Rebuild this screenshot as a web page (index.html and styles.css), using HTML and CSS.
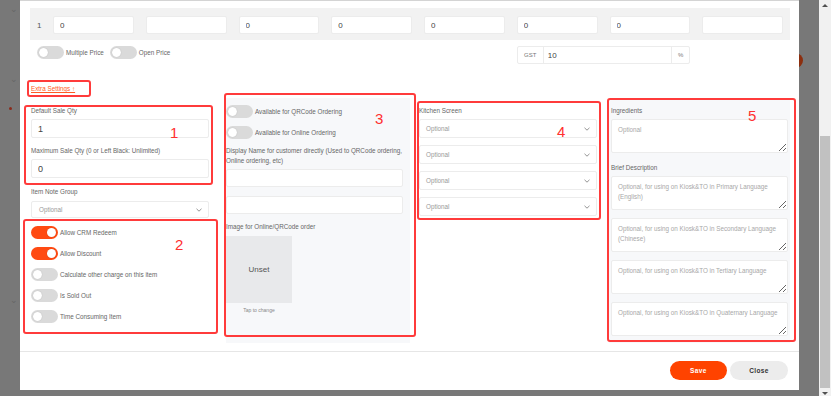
FILE: index.html
```html
<!DOCTYPE html>
<html lang="en">
<head>
    <meta charset="UTF-8">
    <meta name="viewport" content="width=device-width, initial-scale=1.0">
    <title>Edit Item</title>
    <link rel="stylesheet" href="styles.css">
</head>
<body>
<div class="screen">
    <div class="backdrop">
        <span class="under-chev chev-a">&#8964;</span>
        <span class="under-chev chev-b">&#8964;</span>
        <span class="under-chev chev-c">&#8964;</span>
        <span class="under-dot"></span>
        <span class="under-btn"></span>

        <div class="modal">
            <div class="modal-body">
                <div class="price-row">
                    <span class="row-no">1</span>
                    <input class="cell" value="0">
                    <input class="cell" value="">
                    <input class="cell" value="0">
                    <input class="cell" value="0">
                    <input class="cell" value="0">
                    <input class="cell" value="0">
                    <input class="cell" value="0">
                    <input class="cell" value="">
                </div>
                <div class="price-opts">
                    <div class="switches">
                        <label class="switch-line"><span class="switch"></span>Multiple Price</label>
                        <label class="switch-line"><span class="switch"></span>Open Price</label>
                    </div>
                    <div class="gst">
                        <span class="addon addon-gst">GST</span>
                        <input class="gst-input" value="10">
                        <span class="addon addon-pct">%</span>
                    </div>
                </div>

                <div class="extra-head"><a class="extra-link" href="#">Extra Settings ↑</a></div>

                <div class="extra">
                    <div class="col col-qty">
                        <div class="label">Default Sale Qty</div>
                        <input class="field" value="1">
                        <div class="label gap-label">Maximum Sale Qty (0 or Left Black: Unlimited)</div>
                        <input class="field" value="0">
                        <div class="label note-label">Item Note Group</div>
                        <div class="select select-note"><span>Optional</span>
                            <svg width="6" height="4" viewBox="0 0 6 4"><path d="M0.5 0.8 L3 3.2 L5.5 0.8" fill="none" stroke="#888" stroke-width="0.9"/></svg>
                        </div>
                        <div class="toggles">
                            <label class="switch-line"><span class="switch on"></span>Allow CRM Redeem</label>
                            <label class="switch-line"><span class="switch on"></span>Allow Discount</label>
                            <label class="switch-line"><span class="switch"></span>Calculate other charge on this item</label>
                            <label class="switch-line"><span class="switch"></span>Is Sold Out</label>
                            <label class="switch-line"><span class="switch"></span>Time Consuming Item</label>
                        </div>
                    </div>

                    <div class="col col-online panel">
                        <label class="switch-line"><span class="switch"></span>Available for QRCode Ordering</label>
                        <label class="switch-line"><span class="switch"></span>Available for Online Ordering</label>
                        <div class="label display-label">Display Name for customer directly (Used to QRCode ordering, Online ordering, etc)</div>
                        <input class="field field-name" value="">
                        <input class="field field-name second" value="">
                        <div class="label image-label">Image for Online/QRCode order</div>
                        <div class="image-box">Unset</div>
                        <div class="image-hint">Tap to change</div>
                    </div>

                    <div class="col col-kitchen">
                        <div class="label">Kitchen Screen</div>
                        <div class="select"><span>Optional</span>
                            <svg width="6" height="4" viewBox="0 0 6 4"><path d="M0.5 0.8 L3 3.2 L5.5 0.8" fill="none" stroke="#888" stroke-width="0.9"/></svg>
                        </div>
                        <div class="select"><span>Optional</span>
                            <svg width="6" height="4" viewBox="0 0 6 4"><path d="M0.5 0.8 L3 3.2 L5.5 0.8" fill="none" stroke="#888" stroke-width="0.9"/></svg>
                        </div>
                        <div class="select"><span>Optional</span>
                            <svg width="6" height="4" viewBox="0 0 6 4"><path d="M0.5 0.8 L3 3.2 L5.5 0.8" fill="none" stroke="#888" stroke-width="0.9"/></svg>
                        </div>
                        <div class="select"><span>Optional</span>
                            <svg width="6" height="4" viewBox="0 0 6 4"><path d="M0.5 0.8 L3 3.2 L5.5 0.8" fill="none" stroke="#888" stroke-width="0.9"/></svg>
                        </div>
                    </div>

                    <div class="col col-desc panel">
                        <div class="label">Ingredients</div>
                        <textarea class="area" placeholder="Optional"></textarea>
                        <div class="label brief-label">Brief Description</div>
                        <textarea class="area" placeholder="Optional, for using on Kiosk&amp;TO in Primary Language (English)"></textarea>
                        <textarea class="area next" placeholder="Optional, for using on Kiosk&amp;TO in Secondary Language (Chinese)"></textarea>
                        <textarea class="area next" placeholder="Optional, for using on Kiosk&amp;TO in Tertiary Language"></textarea>
                        <textarea class="area next" placeholder="Optional, for using on Kiosk&amp;TO in Quaternary Language"></textarea>
                    </div>
                </div>
            </div>

            <div class="modal-footer">
                <button class="btn btn-save">Save</button>
                <button class="btn btn-close">Close</button>
            </div>

            <!-- review markers drawn over the dialog -->
            <div class="mark mark-extra"></div>
            <div class="mark mark-1"></div>
            <div class="mark mark-2"></div>
            <div class="mark mark-3"></div>
            <div class="mark mark-4"></div>
            <div class="mark mark-5"></div>
            <span class="mark-no no-1">1</span>
            <span class="mark-no no-2">2</span>
            <span class="mark-no no-3">3</span>
            <span class="mark-no no-4">4</span>
            <span class="mark-no no-5">5</span>
        </div>
    </div>

    <div class="scrollbar">
        <span class="arrow arrow-up"></span>
        <div class="track"><div class="thumb"></div></div>
        <span class="arrow arrow-down"></span>
    </div>
</div>
</body>
</html>
```

FILE: styles.css
```css
* {
    box-sizing: border-box;
}
body {
    margin: 0;
    font-family: "Liberation Sans", Arial, sans-serif;
    background-color: #787878;
    color: #333;
}
.screen {
    display: flex;
    height: 396px;
    overflow: hidden;
}
.backdrop {
    position: relative;
    flex: 1;
}

/* page under the overlay */
.under-chev {
    position: absolute;
    left: 10px;
    font-size: 9px;
    color: #666;
}
.chev-a { top: 4px; }
.chev-b { top: 74px; }
.chev-c { top: 295px; }
.under-dot {
    position: absolute;
    left: 9px;
    top: 107px;
    width: 3px;
    height: 3px;
    border-radius: 50%;
    background-color: #8a2a1a;
}
.under-btn {
    position: absolute;
    left: 786px;
    top: 53px;
    width: 17px;
    height: 15px;
    border-radius: 8px;
    background-color: #8c2e0e;
}

/* dialog */
.modal {
    position: relative;
    z-index: 1;
    width: 779px;
    height: 390px;
    margin: 0 auto;
    background-color: #fff;
    border-top: 1px solid #d4d4d4;
}
.modal-body {
    padding: 7px 9px 8px 10px;
}
.price-row, .price-opts {
    display: grid;
    grid-template-columns: 4px repeat(8, 1fr);
    column-gap: 12px;
    padding: 0 7px;
}
.price-row {
    align-items: center;
    background-color: #f2f2f2;
    padding-top: 8px;
    padding-bottom: 6px;
}
.row-no {
    font-size: 8px;
    color: #555;
}
input {
    font-family: inherit;
    outline: none;
}
.cell {
    width: 100%;
    height: 18px;
    border: 1px solid #ececec;
    border-radius: 2px;
    padding: 0 6px;
    font-size: 8px;
    color: #444;
}
.price-opts {
    margin-top: 6px;
    align-items: start;
}
.switches {
    grid-column: 1 / 7;
    display: flex;
    gap: 6px;
}
.gst {
    grid-column: 7 / 9;
    display: flex;
    height: 18px;
    border: 1px solid #ececec;
    border-radius: 2px;
}
.addon {
    display: flex;
    align-items: center;
    justify-content: center;
    font-size: 6px;
    color: #777;
}
.addon-gst {
    width: 26px;
    border-right: 1px solid #ececec;
}
.addon-pct {
    width: 18px;
    border-left: 1px solid #ececec;
}
.gst-input {
    flex: 1;
    min-width: 0;
    border: none;
    padding: 0 4px;
    font-size: 8px;
    color: #444;
}

/* switches */
.switch-line {
    display: flex;
    align-items: center;
    gap: 2px;
    font-size: 6.3px;
    color: #666;
    height: 13px;
}
.switch {
    position: relative;
    width: 27px;
    height: 13px;
    border-radius: 7px;
    background-color: #dadada;
    flex-shrink: 0;
}
.switch::after {
    content: "";
    position: absolute;
    top: 2px;
    left: 2px;
    width: 9px;
    height: 9px;
    border-radius: 50%;
    background-color: #fff;
    box-shadow: 0 0 1px rgba(0, 0, 0, 0.25);
}
.switch.on {
    background-color: #ff4a12;
}
.switch.on::after {
    left: 16px;
}

.extra-head {
    height: 8px;
    margin: 18px 0 0 1px;
    line-height: 8px;
}
.extra-link {
    font-size: 6.3px;
    color: #ff5a24;
}

/* extra settings columns */
.extra {
    display: flex;
    align-items: stretch;
    margin: 8px 0 0 1px;
}
.col {
    display: flex;
    flex-direction: column;
    padding-top: 9px;
}
.col-qty {
    width: 178px;
    margin-right: 17px;
}
.col-online {
    width: 184px;
    margin-right: 9px;
    padding: 7px 7px 0 0;
}
.col-kitchen {
    width: 178px;
    margin-right: 12px;
}
.col-desc {
    width: 181px;
    padding: 9px 2px 7px 2px;
}
.panel {
    background-color: #f7f8fa;
}
.label {
    font-size: 6.3px;
    line-height: 8px;
    color: #666;
}
.field {
    width: 100%;
    height: 19px;
    margin-top: 4px;
    border: 1px solid #ececec;
    border-radius: 2px;
    padding: 0 6px;
    font-size: 9px;
    color: #444;
}
.gap-label {
    margin-top: 9px;
}
.note-label {
    margin-top: 10px;
}
.select {
    display: flex;
    align-items: center;
    justify-content: space-between;
    height: 19px;
    margin-top: 7px;
    padding: 0 6px;
    border: 1px solid #ececec;
    border-radius: 2px;
    background-color: #fff;
    font-size: 6.3px;
    color: #999;
}
.col-kitchen .label + .select {
    margin-top: 4px;
}
.select-note {
    height: 17px;
    margin-top: 5px;
    padding-left: 7px;
}
.toggles {
    display: flex;
    flex-direction: column;
    gap: 8px;
    margin-top: 8px;
}
.col-online .switch-line + .switch-line {
    margin-top: 8px;
}
.display-label {
    margin-top: 7px;
    line-height: 10px;
}
.field-name {
    height: 18px;
    margin-top: 3px;
}
.field-name.second {
    margin-top: 9px;
}
.image-label {
    margin-top: 9px;
}
.image-box {
    display: flex;
    align-items: center;
    justify-content: center;
    width: 66px;
    height: 67px;
    margin-top: 5px;
    background-color: #e8e9eb;
    font-size: 8px;
    color: #555;
}
.image-hint {
    width: 66px;
    margin-top: 3px;
    text-align: center;
    font-size: 5px;
    line-height: 8px;
    color: #888;
}
.area {
    width: 100%;
    height: 34px;
    margin-top: 4px;
    padding: 5px 6px;
    border: 1px solid #ececec;
    border-radius: 2px;
    font-family: inherit;
    font-size: 6.3px;
    line-height: 9.5px;
    color: #444;
    outline: none;
}
.area::placeholder {
    color: #a8a8a8;
}
.area.next {
    margin-top: 8px;
}
.brief-label {
    margin-top: 11px;
}

/* footer */
.modal-footer {
    display: flex;
    justify-content: flex-end;
    gap: 3px;
    padding: 9px 11px;
    border-top: 1px solid #e6e6e6;
}
.btn {
    height: 19px;
    border: none;
    border-radius: 10px;
    font-family: inherit;
    font-size: 6.5px;
    font-weight: bold;
    letter-spacing: 0.4px;
}
.btn-save {
    width: 57px;
    background-color: #ff4300;
    color: #fff;
}
.btn-close {
    width: 58px;
    background-color: #ececec;
    color: #333;
}

/* red review markers */
.mark {
    position: absolute;
    border: 2px solid #ff3b3b;
    border-radius: 3px;
    pointer-events: none;
}
.mark-extra { left: 7px; top: 79px; width: 64px; height: 17px; }
.mark-1 { left: 4px; top: 104px; width: 189px; height: 80px; }
.mark-2 { left: 3px; top: 218px; width: 195px; height: 115px; }
.mark-3 { left: 204px; top: 92px; width: 192px; height: 244px; }
.mark-4 { left: 397px; top: 100px; width: 184px; height: 119px; }
.mark-5 { left: 587px; top: 97px; width: 189px; height: 244px; }
.mark-no {
    position: absolute;
    font-size: 15px;
    line-height: 15px;
    color: #ff3030;
}
.no-1 { left: 150px; top: 124px; }
.no-2 { left: 155px; top: 236px; }
.no-3 { left: 355px; top: 110px; }
.no-4 { left: 537px; top: 123px; }
.no-5 { left: 728px; top: 107px; }

/* page scrollbar */
.scrollbar {
    display: flex;
    flex-direction: column;
    align-items: center;
    width: 12px;
    background-color: #f1f1f1;
}
.track {
    flex: 1;
    width: 100%;
    padding: 0 1px;
}
.thumb {
    height: 252px;
    margin-top: 125px;
    background-color: #c1c1c1;
}
.arrow {
    width: 0;
    height: 0;
    margin: 4px 0;
    border-left: 3px solid transparent;
    border-right: 3px solid transparent;
}
.arrow-up {
    border-bottom: 3px solid #505050;
}
.arrow-down {
    border-top: 3px solid #505050;
}
```
